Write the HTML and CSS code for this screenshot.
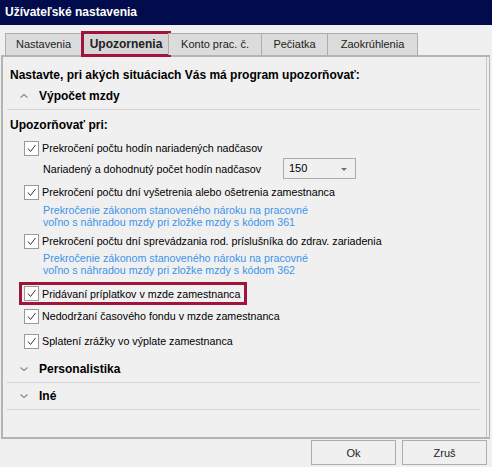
FILE: index.html
```html
<!DOCTYPE html>
<html lang="sk">
<head>
  <meta charset="UTF-8">
  <meta name="viewport" content="width=device-width, initial-scale=1.0">
  <title>Užívateľské nastavenia</title>
  <link rel="stylesheet" href="styles.css">
</head>
<body>
  <div class="window">
    <div class="titlebar">Užívateľské nastavenia</div>

    <!-- Záložky -->
    <div class="tabs">
      <div class="tab tab-1">Nastavenia</div>
      <div class="tab tab-2 active">Upozornenia</div>
      <div class="tab tab-3">Konto prac. č.</div>
      <div class="tab tab-4">Pečiatka</div>
      <div class="tab tab-5">Zaokrúhlenia</div>
    </div>

    <div class="panel">
      <div class="panel-inner">
        <p class="intro">Nastavte, pri akých situáciach Vás má program upozorňovať:</p>

        <!-- Výpočet mzdy -->
        <div class="section-head">
          <svg class="chev" width="8" height="6" viewBox="0 0 8 6"><path d="M0.5 4.5 L4 1.5 L7.5 4.5" fill="none" stroke="#8a8a8a" stroke-width="1.2"/></svg>
          Výpočet mzdy
        </div>
        <div class="section-body">
          <div class="label">Upozorňovať pri:</div>

          <div class="check row-1">
            <span class="box"><svg width="13" height="13" viewBox="0 0 13 13"><path d="M3 6.5 L5.5 9.5 L10.5 3" fill="none" stroke="#333" stroke-width="1"/></svg></span>
            Prekročení počtu hodín nariadených nadčasov
          </div>
          <div class="sub-row">
            <span class="sub-label">Nariadený a dohodnutý počet hodín nadčasov</span>
            <div class="combo">150<span class="arrow"></span></div>
          </div>

          <div class="check row-2">
            <span class="box"><svg width="13" height="13" viewBox="0 0 13 13"><path d="M3 6.5 L5.5 9.5 L10.5 3" fill="none" stroke="#333" stroke-width="1"/></svg></span>
            Prekročení počtu dní vyšetrenia alebo ošetrenia zamestnanca
          </div>
          <p class="note note-1">Prekročenie zákonom stanoveného nároku na pracovné<br>voľno s náhradou mzdy pri zložke mzdy s kódom 361</p>

          <div class="check row-3">
            <span class="box"><svg width="13" height="13" viewBox="0 0 13 13"><path d="M3 6.5 L5.5 9.5 L10.5 3" fill="none" stroke="#333" stroke-width="1"/></svg></span>
            Prekročení počtu dní sprevádzania rod. príslušníka do zdrav. zariadenia
          </div>
          <p class="note note-2">Prekročenie zákonom stanoveného nároku na pracovné<br>voľno s náhradou mzdy pri zložke mzdy s kódom 362</p>

          <div class="check row-4 marked">
            <span class="box"><svg width="13" height="13" viewBox="0 0 13 13"><path d="M3 6.5 L5.5 9.5 L10.5 3" fill="none" stroke="#333" stroke-width="1"/></svg></span>
            Pridávaní príplatkov v mzde zamestnanca
          </div>
          <div class="check row-5">
            <span class="box"><svg width="13" height="13" viewBox="0 0 13 13"><path d="M3 6.5 L5.5 9.5 L10.5 3" fill="none" stroke="#333" stroke-width="1"/></svg></span>
            Nedodržaní časového fondu v mzde zamestnanca
          </div>
          <div class="check row-6">
            <span class="box"><svg width="13" height="13" viewBox="0 0 13 13"><path d="M3 6.5 L5.5 9.5 L10.5 3" fill="none" stroke="#333" stroke-width="1"/></svg></span>
            Splatení zrážky vo výplate zamestnanca
          </div>
        </div>

        <!-- Zbalené sekcie -->
        <div class="section-head">
          <svg class="chev" width="8" height="6" viewBox="0 0 8 6"><path d="M0.5 1.5 L4 4.5 L7.5 1.5" fill="none" stroke="#8a8a8a" stroke-width="1.2"/></svg>
          Personalistika
        </div>
        <div class="section-head">
          <svg class="chev" width="8" height="6" viewBox="0 0 8 6"><path d="M0.5 1.5 L4 4.5 L7.5 1.5" fill="none" stroke="#8a8a8a" stroke-width="1.2"/></svg>
          Iné
        </div>
      </div>
    </div>

    <!-- Tlačidlá -->
    <div class="buttons">
      <button class="btn">Ok</button>
      <button class="btn">Zruš</button>
    </div>
  </div>
</body>
</html>
```

FILE: styles.css
```css
body {
  margin: 0;
  background: #f0f0f0;
  font-family: "Liberation Sans", Arial, sans-serif;
  font-size: 10.7px;
  color: #000;
}
.window {
  width: 492px;
  height: 467px;
  overflow: hidden;
}
.titlebar {
  height: 25px;
  line-height: 24px;
  padding-left: 5px;
  background: #020c4c;
  color: #fff;
  font-weight: bold;
  font-size: 12px;
}

/* Záložky */
.tabs {
  display: flex;
  margin-top: 8px;
  padding-left: 5px;
  height: 22px;
}
.tab {
  height: 21px;
  line-height: 21px;
  text-align: center;
  background: #dcdcdc;
  border: 1px solid #adadad;
  border-bottom: none;
  color: #222;
  font-size: 11px;
  margin-right: -1px;
}
.tab-1 { width: 75px; }
.tab-2 { width: 84px; margin-left: 2px; }
.tab-3 { width: 92px; }
.tab-4 { width: 65px; }
.tab-5 { width: 89px; }
.tab.active {
  font-weight: bold;
  font-size: 12px;
  background: #d6d6d6;
  outline: 3px solid #a0143c;
  outline-offset: -1px;
}

/* Panel */
.panel {
  margin-left: 1px;
  width: 484px;
  height: 380px;
  border: 2px solid #b4b4b4;
  border-right: 1px solid #b4b4b4;
  padding-right: 2px;
}
.panel-inner {
  height: 100%;
  border-right: 1px solid #c4c4c4;
}
.intro {
  margin: 0;
  padding: 10px 0 0 7px;
  line-height: 16px;
  font-weight: bold;
  font-size: 12px;
}
.section-head {
  display: flex;
  align-items: center;
  margin: 0 6px 0 4px;
  height: 27px;
  border-bottom: 1px solid #d4d4d4;
  font-weight: bold;
  font-size: 12px;
  box-sizing: border-box;
}
.section-head .chev {
  margin: 0 11px 0 13px;
}
.section-body {
  padding-top: 7px;
  padding-bottom: 7px;
}
.label {
  padding-left: 7px;
  line-height: 16px;
  font-weight: bold;
  font-size: 12px;
}
.check {
  display: flex;
  align-items: center;
  height: 16px;
  margin-left: 21px;
  line-height: 16px;
}
.check .box {
  width: 13px;
  height: 13px;
  border: 1px solid #999;
  background: #fff;
  margin-right: 3px;
  display: flex;
}
.row-1 { margin-top: 7px; }
.row-2 { margin-top: 5px; }
.row-3 { margin-top: 5px; }
.row-5 { margin-top: 3px; }
.row-6 { margin-top: 9px; }
.check.marked {
  width: fit-content;
  height: 23px;
  box-sizing: border-box;
  margin: 6px 0 0 16px;
  padding: 0 4px 0 2px;
  border: 3px solid #a0143c;
}
.sub-row {
  display: flex;
  align-items: center;
  margin: 2px 0 0 40px;
  height: 21px;
}
.sub-label {
  width: 240px;
  white-space: nowrap;
}
.combo {
  position: relative;
  width: 66px;
  height: 19px;
  line-height: 19px;
  padding-left: 5px;
  border: 1px solid #adadad;
  background: #f0f0f0;
  font-size: 11px;
}
.arrow {
  position: absolute;
  right: 8px;
  top: 9px;
  border-left: 3px solid transparent;
  border-right: 3px solid transparent;
  border-top: 3px solid #6d6d6d;
}
.note {
  margin: 4px 0 0 40px;
  line-height: 12px;
  color: #3c94ea;
}
.note-2 { margin-top: 3px; }

/* Tlačidlá */
.buttons {
  display: flex;
  justify-content: flex-end;
  gap: 6px;
  padding: 1px 5px 0 0;
}
.btn {
  width: 85px;
  height: 25px;
  border: 1px solid #adadad;
  background: #f0f0f0;
  font-family: inherit;
  font-size: 11px;
  color: #222;
}
```
